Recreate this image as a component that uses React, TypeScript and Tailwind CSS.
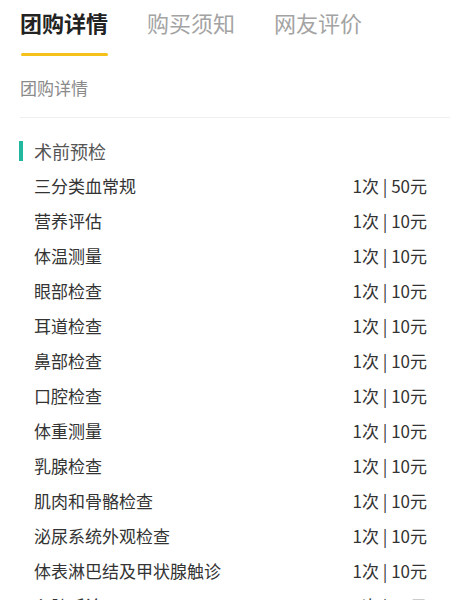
const items: [string, string][] = [
  ['三分类血常规', '1次 | 50元'],
  ['营养评估', '1次 | 10元'],
  ['体温测量', '1次 | 10元'],
  ['眼部检查', '1次 | 10元'],
  ['耳道检查', '1次 | 10元'],
  ['鼻部检查', '1次 | 10元'],
  ['口腔检查', '1次 | 10元'],
  ['体重测量', '1次 | 10元'],
  ['乳腺检查', '1次 | 10元'],
  ['肌肉和骨骼检查', '1次 | 10元'],
  ['泌尿系统外观检查', '1次 | 10元'],
  ['体表淋巴结及甲状腺触诊', '1次 | 10元'],
  ['心肺听诊', '1次 | 10元'],
];

export default function App() {
  return (
    <div
      className="w-[450px] h-[600px] overflow-hidden bg-white"
      style={{ fontFamily: '"Noto Sans CJK SC", "Noto Sans", sans-serif' }}
    >
      {/* tabs */}
      <div className="flex gap-[39px] pl-5 pt-[5px]">
        <div className="flex flex-col items-center">
          <span className="text-[22px] leading-[34px] font-bold text-[#222]">团购详情</span>
          <div className="mt-[14px] w-[87px] h-[3px] rounded-full bg-[#f5c21b]" />
        </div>
        <span className="text-[22px] leading-[34px] text-[#a3a3a3]">购买须知</span>
        <span className="text-[22px] leading-[34px] text-[#a3a3a3]">网友评价</span>
      </div>

      <div className="pl-5 mt-[19px] text-[17px] leading-[26px] text-[#8a8a8a]">团购详情</div>
      <div className="ml-5 mt-[16px] h-px bg-[#efefef]" />

      {/* section */}
      <div className="mt-[21px] pl-[19px] flex items-center gap-[11px]">
        <div className="w-1 h-[20px] bg-[#22b8a0]" />
        <span className="text-[18px] leading-[24px] text-[#555]">术前预检</span>
      </div>

      <div className="mt-[5px] pl-[34px] pr-[23px]">
        {items.map(([name, price]) => (
          <div key={name} className="flex justify-between items-center h-[35px] text-[17px] text-[#333]">
            <span>{name}</span>
            <span>{price}</span>
          </div>
        ))}
      </div>
    </div>
  );
}
